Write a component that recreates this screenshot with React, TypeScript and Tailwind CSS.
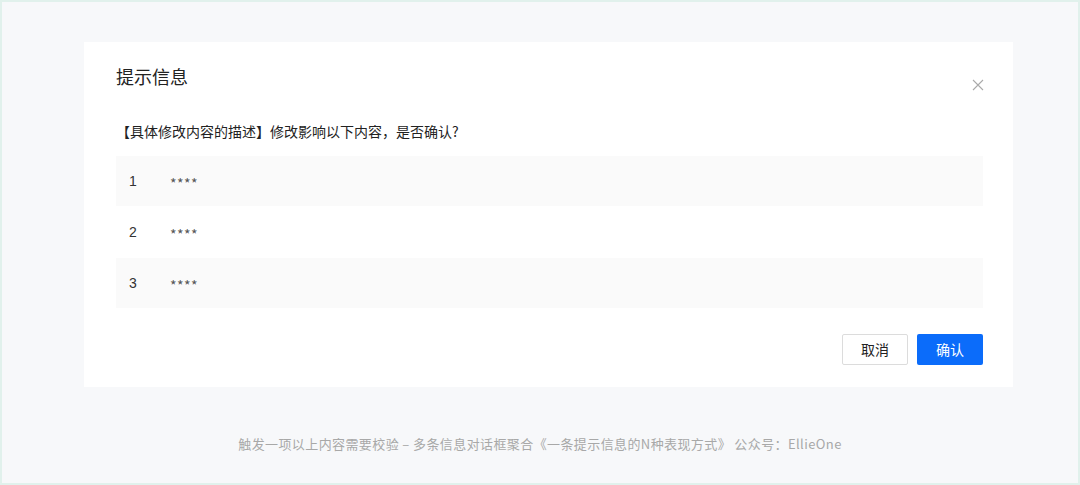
import React from "react";

const rows = [
  { no: 1, text: "****" },
  { no: 2, text: "****" },
  { no: 3, text: "****" },
];

const font = { fontFamily: '"Noto Sans CJK SC", "Liberation Sans", sans-serif' };

const App = () => {
  return (
    <div
      className="w-[1080px] h-[485px] border-[2px] border-[#e1f1ec] bg-[#f7f8fa] flex flex-col overflow-hidden"
      style={font}
    >
      <div className="ml-[82px] mt-[40px] w-[929px] h-[345px] bg-white flex flex-col pl-[32px] pr-[30px]">
        <div className="flex items-start justify-between pt-[21px]">
          <h1 className="text-[18px] leading-[26px] text-[#222] font-normal">提示信息</h1>
          <button className="mt-[16px] mr-[-1px] text-[#aaa]" type="button" aria-label="close">
            <svg width="12" height="12" viewBox="0 0 12 12" fill="none" stroke="currentColor" strokeWidth="1.1">
              <path d="M1 1L11 11M11 1L1 11" />
            </svg>
          </button>
        </div>
        <p className="mt-[30px] text-[14px] leading-[20px] text-[#222]">
          【具体修改内容的描述】修改影响以下内容，是否确认?
        </p>
        <div className="mt-[15px] flex flex-col">
          {rows.map((r, i) => (
            <div
              key={r.no}
              className={
                "flex items-center text-[14px] text-[#333] " +
                (i % 2 === 0 ? "bg-[#fafafa] " : "bg-white ") +
                (i === 1 ? "h-[52px]" : "h-[50px]")
              }
            >
              <span className="w-[54px] pl-[13px]" style={{ fontFamily: '"Liberation Sans", sans-serif' }}>{r.no}</span>
              <span className="pt-[5px] text-[14px] text-[#555] tracking-[0.5px]">{r.text}</span>
            </div>
          ))}
        </div>
        <div className="mt-[26px] flex justify-end gap-[9px]">
          <button
            type="button"
            className="w-[66px] h-[31px] border border-[#dcdcdc] rounded-[2px] bg-white text-[14px] text-[#222]"
          >
            取消
          </button>
          <button
            type="button"
            className="w-[66px] h-[31px] rounded-[2px] bg-[#0b6cfa] text-[14px] text-white"
          >
            确认
          </button>
        </div>
      </div>
      <p className="mt-[47px] text-center text-[13px] leading-[20px] text-[#a8a8a8] tracking-[0.4px]">
        触发一项以上内容需要校验 – 多条信息对话框聚合《一条提示信息的N种表现方式》 公众号：EllieOne
      </p>
    </div>
  );
};

export default App;
